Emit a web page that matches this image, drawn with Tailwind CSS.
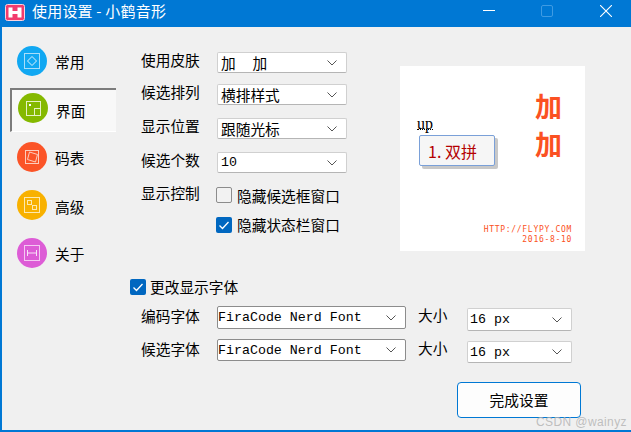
<!DOCTYPE html>
<html lang="zh">
  <head>
    <meta charset="UTF-8" />
    <title>使用设置 - 小鹤音形</title>
    <script src="https://cdn.jsdelivr.net/npm/@tailwindcss/browser@4"></script>
  </head>
  <body class="relative w-[631px] h-[432px] overflow-hidden bg-[#f0f0f0] text-black font-['Noto_Sans_CJK_SC','Liberation_Sans',sans-serif] text-[14.7px] leading-[20px]">
    <!-- title bar -->
    <div class="flex items-center h-[27px] bg-[#0078d4] text-white">
      <svg class="ml-[5px] mb-[2px] w-[20px] h-[17px]" viewBox="0 0 20 17">
        <rect x=".5" y=".5" width="19" height="16" rx="2" fill="#f23c6e" stroke="#fbd3de" />
        <path d="M3.500 3.500h4v3.500h5V3.500h4v10h-4V10h-5v3.500h-4z" fill="#fff" />
      </svg>
      <span class="ml-[7px] mb-[5px] text-[15px] tracking-[0.2px]">使用设置 - 小鹤音形</span>
      <div class="ml-auto mb-[5px] flex items-center">
        <svg class="w-[12px] h-[12px] mr-[46px]" viewBox="0 0 12 12"><path d="M0 5.500h12" stroke="#fff" /></svg>
        <svg class="w-[12px] h-[12px] mr-[47px]" viewBox="0 0 12 12"><rect x=".5" y=".5" width="11" height="11" rx="1.500" fill="none" stroke="#3f9be3" /></svg>
        <svg class="w-[12px] h-[12px] mr-[19px]" viewBox="0 0 12 12"><path d="M0 0l12 12M12 0L0 12" stroke="#fff" stroke-width="1.100" /></svg>
      </div>
    </div>

    <div class="h-[405px] border-l-2 border-b-2 border-[#0078d4] box-border">
      <div class="flex h-[239px]">
        <!-- side nav -->
        <div class="w-[139px] pt-[11px] pl-[8px] shrink-0">
          <div class="flex items-center h-[44px] w-[106px] border-l-2 border-t-2 border-transparent pl-[5px]">
            <svg class="w-[30px] h-[30px] shrink-0" viewBox="0 0 30 30">
              <circle cx="15" cy="15" r="15" fill="#11a8f2" />
              <rect x="7.500" y="7.500" width="15" height="15" fill="none" stroke="#a9def9" />
              <path d="M15 10.500l4.500 4.500-4.500 4.500-4.500-4.500z" fill="none" stroke="#dff3fd" />
            </svg>
            <span class="ml-[8px] mt-[2px]">常用</span>
          </div>
          <div class="flex items-center h-[44px] w-[106px] mt-[6px] pb-[6px] border-l-2 border-t-2 border-b border-[#7c7c7c] border-b-white pl-[6px] bg-[#f8f8f8]">
            <svg class="w-[30px] h-[30px] shrink-0" viewBox="0 0 30 30">
              <circle cx="15" cy="15" r="15" fill="#85b900" />
              <rect x="8.500" y="8.500" width="14" height="14" fill="none" stroke="#e6f1c4" />
              <rect x="16.500" y="15.500" width="6" height="7" fill="none" stroke="#e6f1c4" />
              <rect x="11" y="11" width="2" height="2" fill="#fff" />
            </svg>
            <span class="ml-[8px] mt-[6px]">界面</span>
          </div>
          <div class="flex items-center h-[44px] w-[106px] mt-[2px] border-l-2 border-t-2 border-transparent pl-[5px]">
            <svg class="w-[30px] h-[30px] shrink-0" viewBox="0 0 30 30">
              <circle cx="15" cy="15" r="15" fill="#fb5427" />
              <rect x="8.500" y="8.500" width="13" height="13" fill="none" stroke="#fdcdbd" />
              <path d="M12.500 10l8 2.500-2 7.500-8-2.500z" fill="none" stroke="#fdcdbd" />
            </svg>
            <span class="ml-[8px] mt-[2px]">码表</span>
          </div>
          <div class="flex items-center h-[44px] w-[106px] mt-[4px] border-l-2 border-t-2 border-transparent pl-[5px]">
            <svg class="w-[30px] h-[30px] shrink-0" viewBox="0 0 30 30">
              <circle cx="15" cy="15" r="15" fill="#f8b100" />
              <rect x="7.500" y="7.500" width="15" height="15" fill="none" stroke="#fde9b0" />
              <rect x="10.500" y="10.500" width="4" height="4" fill="none" stroke="#fde9b0" />
              <rect x="15.500" y="15.500" width="4" height="4" fill="none" stroke="#fde9b0" />
            </svg>
            <span class="ml-[8px] mt-[4px]">高级</span>
          </div>
          <div class="flex items-center h-[44px] w-[106px] mt-[4px] border-l-2 border-t-2 border-transparent pl-[5px]">
            <svg class="w-[30px] h-[30px] shrink-0" viewBox="0 0 30 30">
              <circle cx="15" cy="15" r="15" fill="#dd5cd6" />
              <rect x="7.500" y="7.500" width="15" height="15" fill="none" stroke="#f4c9f2" />
              <path d="M10.500 12v6M19.500 12v6M10.500 15h9" fill="none" stroke="#f8e2f7" />
            </svg>
            <span class="ml-[8px] mt-[2px]">关于</span>
          </div>
        </div>

        <!-- display options -->
        <div class="w-[259px] pt-[25px] shrink-0">
          <div class="flex h-[21px]">
            <span class="w-[76px] -mt-[2px]">使用皮肤</span>
            <div class="flex items-center justify-between w-[130px] h-[21px] pl-[3px] pr-[9px] bg-white border border-[#d0d0d0] border-b-[#b5b5b5] rounded-[2px]">
              <span class="tracking-[1px]">加　加</span>
              <svg class="w-[10px] h-[6px]" viewBox="0 0 10 6"><path d="M.5.5L5 5 9.500.5" fill="none" stroke="#555" /></svg>
            </div>
          </div>
          <div class="flex h-[21px] mt-[11px]">
            <span class="w-[76px] -mt-[2px]">候选排列</span>
            <div class="flex items-center justify-between w-[130px] h-[21px] pl-[3px] pr-[9px] bg-white border border-[#d0d0d0] border-b-[#b5b5b5] rounded-[2px]">
              <span>横排样式</span>
              <svg class="w-[10px] h-[6px]" viewBox="0 0 10 6"><path d="M.5.5L5 5 9.500.5" fill="none" stroke="#555" /></svg>
            </div>
          </div>
          <div class="flex h-[21px] mt-[13px]">
            <span class="w-[76px] -mt-[2px]">显示位置</span>
            <div class="flex items-center justify-between w-[130px] h-[21px] pl-[3px] pr-[9px] bg-white border border-[#d0d0d0] border-b-[#b5b5b5] rounded-[2px]">
              <span>跟随光标</span>
              <svg class="w-[10px] h-[6px]" viewBox="0 0 10 6"><path d="M.5.5L5 5 9.500.5" fill="none" stroke="#555" /></svg>
            </div>
          </div>
          <div class="flex h-[21px] mt-[13px]">
            <span class="w-[76px] -mt-[2px]">候选个数</span>
            <div class="flex items-center justify-between w-[130px] h-[21px] pl-[3px] pr-[9px] bg-white border border-[#d0d0d0] border-b-[#b5b5b5] rounded-[2px]">
              <span class="font-['Liberation_Mono',monospace] font-light text-[13.300px] mt-[1px]">10</span>
              <svg class="w-[10px] h-[6px]" viewBox="0 0 10 6"><path d="M.5.5L5 5 9.500.5" fill="none" stroke="#555" /></svg>
            </div>
          </div>
          <div class="flex mt-[14px]">
            <span class="w-[75px] -mt-[4px]">显示控制</span>
            <div>
              <div class="flex items-center h-[16px]">
                <span class="w-[16px] h-[16px] bg-[#f2f2f2] border border-[#8c8c8c] rounded-[2px]"></span>
                <span class="ml-[5px] mt-[1px]">隐藏候选框窗口</span>
              </div>
              <div class="flex items-center h-[16px] mt-[14px]">
                <svg class="w-[16px] h-[16px]" viewBox="0 0 16 16">
                  <rect width="16" height="16" rx="2" fill="#0067c0" />
                  <path d="M3.500 8.500l3 3 6-6.500" fill="none" stroke="#fff" stroke-width="1.300" />
                </svg>
                <span class="ml-[5px]">隐藏状态栏窗口</span>
              </div>
            </div>
          </div>
        </div>

        <!-- skin preview -->
        <div class="flex flex-col w-[185px] h-[185px] mt-[39px] pt-[27px] pb-[6px] pr-[13px] bg-white shrink-0">
          <div class="flex justify-between mr-[10px]">
            <div class="pl-[17px] pt-[26px]">
              <div class="w-[16px] h-[11px] border-b border-dotted border-black font-['Liberation_Serif',serif] text-[16px] leading-[9px]">up</div>
              <div class="flex items-center w-[76px] h-[31px] mt-[5px] ml-[2px] pl-[8px] bg-[#f6f6f6] border border-[#7aa0d8] rounded-[2px] shadow-[3px_3px_0_#c8c8c8] text-[#b40000] text-[16px]">1. 双拼</div>
            </div>
            <div class="flex flex-col -mt-[6px] text-[#fb5122] text-[27px] leading-[38px] font-bold">
              <span>加</span>
              <span>加</span>
            </div>
          </div>
          <div class="mt-auto text-right text-[#fb5122] font-['DejaVu_Sans_Mono',monospace] text-[8px] leading-[10px] tracking-[0.7px]">
            <div>HTTP://FLYPY.COM</div>
            <div>2016-8-10</div>
          </div>
        </div>
      </div>

      <!-- font options -->
      <div class="ml-[128px]">
        <div class="flex items-center h-[16px] mt-[13px]">
          <svg class="w-[16px] h-[16px]" viewBox="0 0 16 16">
            <rect width="16" height="16" rx="2" fill="#0067c0" />
            <path d="M3.500 8.500l3 3 6-6.500" fill="none" stroke="#fff" stroke-width="1.300" />
          </svg>
          <span class="ml-[4px]">更改显示字体</span>
        </div>
        <div class="flex h-[22px] mt-[11px] pl-[11px]">
          <span class="w-[76px]">编码字体</span>
          <div class="flex items-center justify-between w-[189px] h-[23px] pl-0 pr-[9px] bg-white border border-[#8c8c8c] rounded-[2px]">
            <span class="font-['Liberation_Mono',monospace] text-[13.300px] mt-[1px]">FiraCode Nerd Font</span>
            <svg class="w-[10px] h-[6px]" viewBox="0 0 10 6"><path d="M.5.5L5 5 9.500.5" fill="none" stroke="#555" /></svg>
          </div>
          <span class="ml-[12px] w-[49px] -mt-[1px]">大小</span>
          <div class="flex items-center justify-between w-[105px] h-[23px] mt-[2px] pl-[2px] pr-[9px] bg-white border border-[#d0d0d0] border-b-[#b5b5b5] rounded-[2px]">
            <span class="font-['Liberation_Mono',monospace] text-[13.300px] mt-[1px]">16 px</span>
            <svg class="w-[10px] h-[6px]" viewBox="0 0 10 6"><path d="M.5.5L5 5 9.500.5" fill="none" stroke="#555" /></svg>
          </div>
        </div>
        <div class="flex h-[22px] mt-[11px] pl-[11px]">
          <span class="w-[76px]">候选字体</span>
          <div class="flex items-center justify-between w-[189px] h-[22px] pl-0 pr-[9px] bg-white border border-[#8c8c8c] rounded-[2px]">
            <span class="font-['Liberation_Mono',monospace] text-[13.300px] mt-[1px]">FiraCode Nerd Font</span>
            <svg class="w-[10px] h-[6px]" viewBox="0 0 10 6"><path d="M.5.5L5 5 9.500.5" fill="none" stroke="#555" /></svg>
          </div>
          <span class="ml-[12px] w-[49px] -mt-[1px]">大小</span>
          <div class="flex items-center justify-between w-[105px] h-[22px] mt-[2px] pl-[2px] pr-[9px] bg-white border border-[#d0d0d0] border-b-[#b5b5b5] rounded-[2px]">
            <span class="font-['Liberation_Mono',monospace] text-[13.300px] mt-[1px]">16 px</span>
            <svg class="w-[10px] h-[6px]" viewBox="0 0 10 6"><path d="M.5.5L5 5 9.500.5" fill="none" stroke="#555" /></svg>
          </div>
        </div>
        <div class="flex justify-end mt-[21px] pr-[48px]">
          <div class="flex items-center justify-center w-[124px] h-[36px] mr-[2px] bg-[#fdfdfd] border border-[#0078d4] rounded-[4px]">完成设置</div>
        </div>
      </div>
    </div>

    <!-- watermark -->
    <div class="absolute right-[4px] bottom-[3px] text-[12px] leading-[14px] text-[#b0b0b0]/80 font-['Liberation_Sans',sans-serif] tracking-[0.4px]">CSDN @wainyz</div>
  </body>
</html>
